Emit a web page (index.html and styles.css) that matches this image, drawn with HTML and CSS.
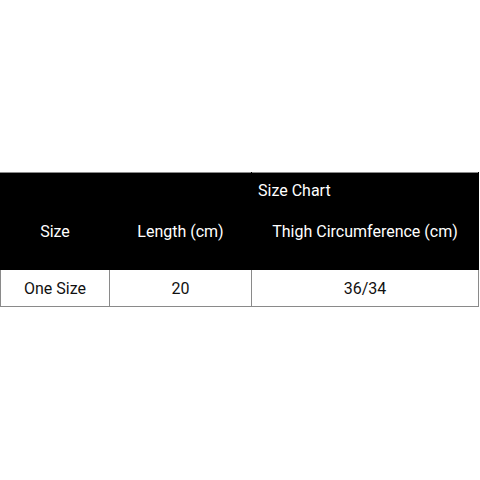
FILE: index.html
```html
<!DOCTYPE html>
<html>
<head>
<meta charset="utf-8">
<link rel="stylesheet" href="styles.css">
</head>
<body>
<div class="page">
<table class="chart">
  <colgroup>
    <col class="c1"><col class="c2"><col class="c3">
  </colgroup>
  <thead>
    <tr class="r1">
      <th colspan="2"></th>
      <th class="title">Size Chart</th>
    </tr>
    <tr class="r2">
      <th>Size</th>
      <th>Length (cm)</th>
      <th>Thigh Circumference (cm)</th>
    </tr>
  </thead>
  <tbody>
    <tr class="r3">
      <td>One Size</td>
      <td>20</td>
      <td>36/34</td>
    </tr>
  </tbody>
</table>
</div>
</body>
</html>
```

FILE: styles.css
```css
html, body {
  margin: 0;
  padding: 0;
  background: #fff;
}
.page {
  padding-top: 172px;
  font-family: Roboto, "Liberation Sans", sans-serif;
}
.chart {
  border-collapse: collapse;
  width: 478px;
  table-layout: fixed;
  font-size: 16px;
}
.c1 { width: 109px; }
.c2 { width: 142px; }
.c3 { width: 227px; }
.chart th {
  background: #000;
  color: #fff;
  font-weight: normal;
  border: 1px solid #000;
  padding: 0;
  text-align: center;
}
.chart thead tr.r1 th { border-top: 1px solid #8a8a8a; }
.r1 { height: 36px; }
.r1 .title {
  text-align: left;
  padding-left: 6px;
  vertical-align: middle;
  padding-top: 0;
}
.r2 { height: 61px; }
.r2 th { padding-bottom: 16px; }
.chart td {
  border: 1px solid #8a8a8a;
  text-align: center;
  color: #111;
  height: 36px;
  padding: 0;
}
```
